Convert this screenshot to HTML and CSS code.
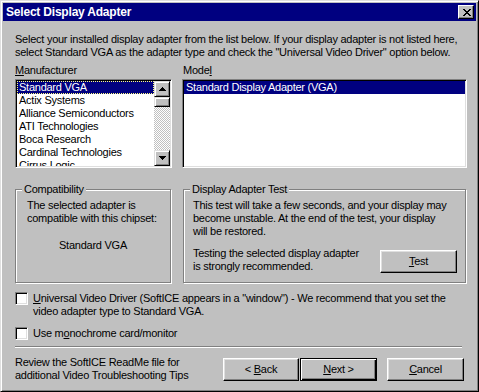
FILE: index.html
```html
<!DOCTYPE html>
<html>
<head>
<meta charset="utf-8">
<title>Select Display Adapter</title>
<link rel="stylesheet" href="styles.css">
</head>
<body>
<div class="window">
  <div class="titlebar">
    <span class="title">Select Display Adapter</span>
    <span class="close">
      <svg width="8" height="7" viewBox="0 0 8 7" shape-rendering="crispEdges"><path fill="#000" d="M0 0h2v1h-2z M6 0h2v1h-2z M1 1h2v1h-2z M5 1h2v1h-2z M2 2h4v1h-4z M3 3h2v1h-2z M2 4h4v1h-4z M1 5h2v1h-2z M5 5h2v1h-2z M0 6h2v1h-2z M6 6h2v1h-2z"/></svg>
    </span>
  </div>
  <div class="content">
    <p class="intro">Select your installed display adapter from the list below. If your display adapter is not listed here,<br>select Standard VGA as the adapter type and check the "Universal Video Driver" option below.</p>

    <div class="lists">
      <div class="col col-left">
        <div class="label"><u>M</u>anufacturer</div>
        <div class="listbox mfr">
          <ul class="items">
            <li class="sel focus">Standard VGA</li>
            <li>Actix Systems</li>
            <li>Alliance Semiconductors</li>
            <li>ATI Technologies</li>
            <li>Boca Research</li>
            <li>Cardinal Technologies</li>
            <li>Cirrus Logic</li>
          </ul>
          <div class="scrollbar">
            <div class="sbtn">
              <svg width="7" height="4" viewBox="0 0 7 4" shape-rendering="crispEdges"><path fill="#000" d="M3 0h1v1h-1z M2 1h3v1h-3z M1 2h5v1h-5z M0 3h7v1h-7z"/></svg>
            </div>
            <div class="thumb"></div>
            <div class="track"></div>
            <div class="sbtn">
              <svg width="7" height="4" viewBox="0 0 7 4" shape-rendering="crispEdges"><path fill="#000" d="M0 0h7v1h-7z M1 1h5v1h-5z M2 2h3v1h-3z M3 3h1v1h-1z"/></svg>
            </div>
          </div>
        </div>
      </div>
      <div class="col col-right">
        <div class="label label-model">Mode<u>l</u></div>
        <div class="listbox model">
          <ul class="items">
            <li class="sel">Standard Display Adapter (VGA)</li>
          </ul>
        </div>
      </div>
    </div>

    <div class="groups">
      <fieldset class="group compat">
        <legend>Compatibility</legend>
        <div class="gbody">
          <p>The selected adapter is<br>compatible with this chipset:</p>
          <p class="chipset">Standard VGA</p>
        </div>
      </fieldset>
      <fieldset class="group test">
        <legend>Display Adapter Test</legend>
        <div class="gbody">
          <p>This test will take a few seconds, and your display may<br>become unstable. At the end of the test, your display<br>will be restored.</p>
          <div class="testrow">
            <p>Testing the selected display adapter<br>is strongly recommended.</p>
            <span class="btn btn-test"><span class="blabel"><u>T</u>est</span></span>
          </div>
        </div>
      </fieldset>
    </div>

    <div class="checks">
      <div class="check">
        <span class="box"></span>
        <span class="ctext"><u>U</u>niversal Video Driver (SoftICE appears in a "window") - We recommend that you set the<br>video adapter type to Standard VGA.</span>
      </div>
      <div class="check check2">
        <span class="box"></span>
        <span class="ctext">Use m<u>o</u>nochrome card/monitor</span>
      </div>
    </div>

    <div class="sep"></div>

    <div class="footer">
      <p class="note">Review the SoftICE ReadMe file for<br>additional Video Troubleshooting Tips</p>
      <div class="buttons">
        <span class="btn"><span class="blabel">&lt; <u>B</u>ack</span></span>
        <span class="btn btn-default"><span class="blabel"><u>N</u>ext &gt;</span></span>
        <span class="btn btn-cancel"><span class="blabel"><u>C</u>ancel</span></span>
      </div>
    </div>
  </div>
</div>
</body>
</html>
```

FILE: styles.css
```css
* { box-sizing: border-box; }

html, body {
  margin: 0;
  padding: 0;
  background: #c0c0c0;
}

body {
  font-family: "Liberation Sans", Arial, sans-serif;
  font-size: 11px;
  line-height: 13px;
  letter-spacing: -0.25px;
  color: #000;
}

p { margin: 0; white-space: nowrap; }
u { text-decoration: underline; text-underline-offset: 1px; }

.window {
  width: 479px;
  height: 392px;
  border: 1px solid;
  border-color: #dfdfdf #000 #000 #dfdfdf;
  box-shadow: inset 1px 1px #fff, inset -1px -1px #808080;
  padding: 2px;
  background: #c0c0c0;
}

/* title bar */
.titlebar {
  height: 18px;
  background: #000080;
  display: flex;
  align-items: center;
  justify-content: space-between;
  padding: 0 2px 0 3px;
}
.title {
  color: #fff;
  font-weight: bold;
  font-size: 12px;
  letter-spacing: -0.2px;
  line-height: 18px;
}
.close {
  width: 16px;
  height: 14px;
  background: #c0c0c0;
  border: 1px solid;
  border-color: #fff #000 #000 #fff;
  box-shadow: inset -1px -1px #808080;
  display: flex;
  align-items: center;
  justify-content: center;
  padding-left: 1px;
}
.close svg { display: block; }

/* content */
.content {
  padding: 12px 9px 0 12px;
}

.lists {
  display: flex;
  gap: 10px;
  margin-top: 5px;
}
.col-left { width: 157px; }
.col-right { width: 285px; }
.label { height: 13px; margin-bottom: 2px; }
.label-model { padding-left: 1px; }

.listbox {
  height: 89px;
  background: #fff;
  border: 1px solid;
  border-color: #808080 #fff #fff #808080;
  box-shadow: inset 1px 1px #000, inset -1px -1px #dfdfdf;
  padding: 1px;
  display: flex;
  overflow: hidden;
}
.items {
  list-style: none;
  margin: 0;
  padding: 0;
  flex: 1;
  overflow: hidden;
}
.items li {
  height: 13px;
  padding-left: 2px;
  white-space: nowrap;
}
.items li.sel {
  background: #000080;
  color: #fff;
}
.items li.focus {
  outline: 1px dotted #ffff80;
  outline-offset: -1px;
}

.scrollbar {
  width: 16px;
  display: flex;
  flex-direction: column;
}
.sbtn, .thumb {
  background: #c0c0c0;
  border: 1px solid;
  border-color: #dfdfdf #000 #000 #dfdfdf;
  box-shadow: inset 1px 1px #fff, inset -1px -1px #808080;
}
.sbtn {
  height: 16px;
  display: flex;
  align-items: center;
  justify-content: center;
}
.sbtn svg { display: block; }
.thumb { height: 10px; }
.track {
  flex: 1;
  background: repeating-conic-gradient(#c0c0c0 0 25%, #fff 0 50%) 0 0 / 2px 2px;
}

/* group boxes */
.groups {
  display: flex;
  gap: 12px;
  margin-top: 15px;
}
.group {
  margin: 0;
  padding: 0;
  height: 100px;
  min-width: 0;
  border: 1px solid #808080;
  box-shadow: inset 1px 1px #fff, 1px 1px #fff;
}
.group legend {
  margin-left: 6px;
  padding: 0 2px;
  background: #c0c0c0;
  line-height: 13px;
}
.compat { width: 156px; }
.test { width: 283px; }
.compat .gbody { padding: 3px 0 0 11px; }
.test .gbody { padding: 3px 8px 0 9px; }
.chipset {
  margin-top: 14px;
  text-align: center;
  padding-right: 11px;
}
.testrow {
  display: flex;
  justify-content: space-between;
  align-items: flex-start;
  margin-top: 9px;
}

/* buttons */
.btn {
  display: flex;
  align-items: center;
  justify-content: center;
  width: 76px;
  height: 23px;
  background: #c0c0c0;
  border: 1px solid;
  border-color: #fff #000 #000 #fff;
  box-shadow: inset -1px -1px #808080, inset 1px 1px #dfdfdf;
  white-space: nowrap;
  padding-bottom: 1px;
}
.blabel { white-space: pre; }
.btn-test { margin-top: 3px; width: 77px; }
.btn-default {
  border-color: #000;
  box-shadow: inset 1px 1px #fff, inset -1px -1px #000, inset -2px -2px #808080;
  width: 77px;
}
.btn-cancel { margin-left: 9px; width: 77px; }

/* checkboxes */
.checks { margin-top: 9px; }
.check {
  display: flex;
  align-items: flex-start;
  gap: 5px;
}
.check2 { margin-top: 9px; }
.box {
  flex: none;
  width: 13px;
  height: 13px;
  background: #fff;
  border: 1px solid;
  border-color: #808080 #fff #fff #808080;
  box-shadow: inset 1px 1px #000, inset -1px -1px #dfdfdf;
}
.ctext { white-space: nowrap; }

.sep {
  margin: 6px 5px 0 0;
  height: 2px;
  border-top: 1px solid #808080;
  border-bottom: 1px solid #fff;
}

.footer {
  display: flex;
  justify-content: space-between;
  align-items: flex-start;
  margin-top: 8px;
  padding-right: 3px;
}
.buttons {
  display: flex;
  gap: 1px;
  margin-top: 2px;
}
```
